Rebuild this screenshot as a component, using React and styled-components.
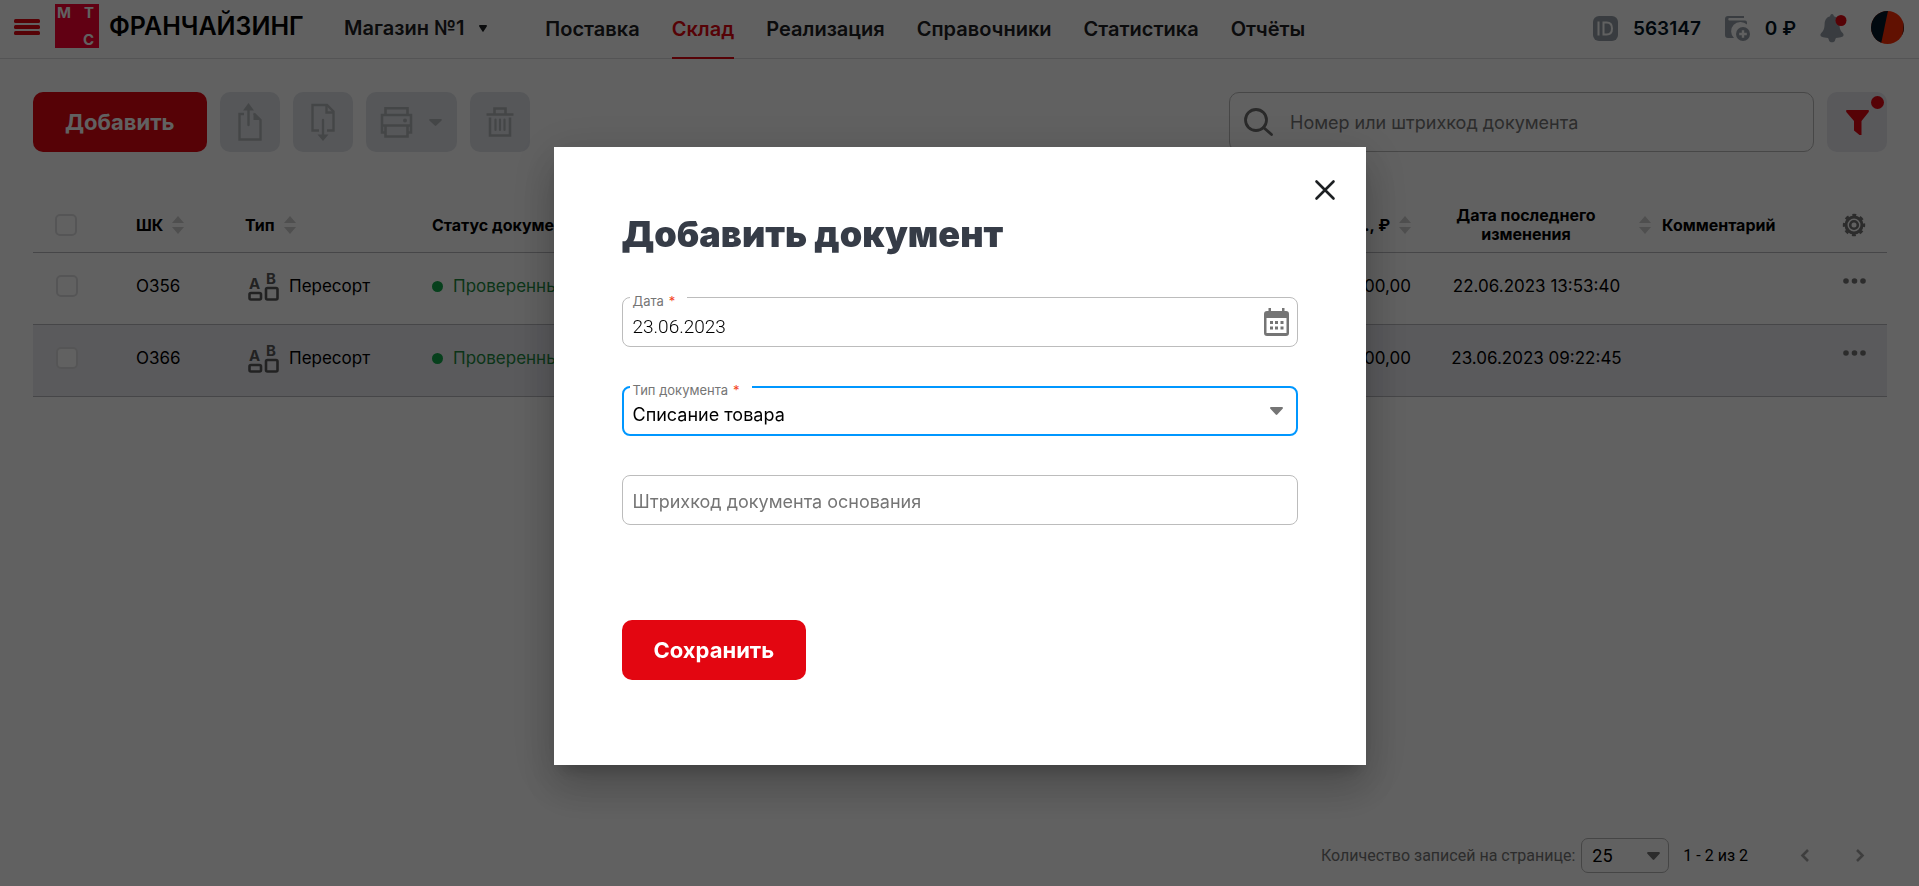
import React, { useState } from 'react';
import styled, { createGlobalStyle } from 'styled-components';

const GlobalStyle = createGlobalStyle`
  * {
    box-sizing: border-box;
  }

  body {
    margin: 0;
    background: #fff;
    color: #000;
    font-family: Inter, Roboto, sans-serif;
  }

  button, input, select {
    font-family: inherit;
  }

  button {
    border: 0;
    padding: 0;
    background: none;
    cursor: pointer;
  }

  svg {
    display: block;
    overflow: visible;
  }
`;

const menu = ['Поставка', 'Склад', 'Реализация', 'Справочники', 'Статистика', 'Отчёты'];

const documents = [
  { code: 'О356', type: 'Пересорт', status: 'Проверенный', sum: '5 000,00', changed: '22.06.2023 13:53:40' },
  { code: 'О366', type: 'Пересорт', status: 'Проверенный', sum: '5 000,00', changed: '23.06.2023 09:22:45' },
];

/* icons */

const BurgerIcon = () => (
  <svg width="26" height="16" viewBox="0 0 26 16" fill="#e30611">
    <rect width="26" height="4" rx="1.5" />
    <rect y="6" width="26" height="4" rx="1.5" />
    <rect y="12" width="26" height="4" rx="1.5" />
  </svg>
);

const Caret = ({ width = 13, height = 8, color = '#757575' }) => (
  <svg width={width} height={height} viewBox="0 0 13 8" fill={color} preserveAspectRatio="none">
    <path d="M1.2 0h10.6c1 0 1.5 1 .8 1.8L7.3 7.5c-.4.5-1.2.5-1.6 0L.4 1.8C-.3 1 .2 0 1.2 0z" />
  </svg>
);

const SortIcon = () => (
  <svg width="12" height="18" viewBox="0 0 12 18" fill="#cfcfcf">
    <path d="M6 0l6 7H0zM0 11h12l-6 7z" />
  </svg>
);

const IdIcon = () => (
  <svg width="25" height="25" viewBox="0 0 25 25">
    <rect width="25" height="25" rx="6" fill="#969fa8" />
    <path d="M5.5 5.5v14M10.5 6.5h3.2c3.5 0 5.3 2.200 5.300 6s-1.800 6-5.300 6h-3.200z" fill="none" stroke="#fff" strokeWidth="2" />
  </svg>
);

const WalletIcon = () => (
  <svg width="25" height="25" viewBox="0 0 25 25">
    <path d="M3 0h16v2H4.5a1 1 0 0 0 0 2.5H20a2 2 0 0 1 2 2v2A9.3 9.3 0 0 0 9 22H3a3 3 0 0 1-3-3V3a3 3 0 0 1 3-3z" fill="#969fa8" />
    <circle cx="18" cy="18" r="7" fill="#969fa8" />
    <path d="M18 14.200v7.600M14.200 18h7.600" stroke="#fff" strokeWidth="2.4" />
  </svg>
);

const BellIcon = () => (
  <svg width="27" height="29" viewBox="0 0 27 29">
    <path d="M12 0c1.2 0 1.8 1 1.9 2.3 3.8 1 5.3 4 5.5 7.7.2 5 1 6.7 3.5 9.2 1.200 1.300.8 3-.7 3.500-1.700.6-3.700 1-6.200 1.200-.4.5-.8 1.300-1 2.500-.3 1.200-1.400 1.800-3 1.800s-2.700-.6-3-1.800c-.2-1.200-.6-2-1-2.500-2.500-.2-4.500-.6-6.200-1.200-1.500-.5-1.900-2.200-.7-3.500C3.600 16.700 4.400 15 4.600 10c.2-3.700 1.700-6.700 5.500-7.700C10.200 1 10.800 0 12 0z" fill="#969fa8" />
    <circle cx="21" cy="6.5" r="5.5" fill="#e30611" />
  </svg>
);

const Avatar = () => (
  <svg width="33" height="33" viewBox="0 0 33 33">
    <defs>
      <clipPath id="avatar"><circle cx="16.5" cy="16.5" r="16.5" /></clipPath>
    </defs>
    <g clipPath="url(#avatar)">
      <rect width="33" height="33" fill="#ff2d05" />
      <path d="M0 0h17l-3 14-1 5-3 14H0z" fill="#031a28" />
      <path d="M31 6c2 5 2 14-1 21l3-2V6z" fill="#3c1a1a" />
    </g>
  </svg>
);

const UploadIcon = () => (
  <svg width="24" height="38" viewBox="0 0 24 38" fill="none" stroke="#b4b7ba" strokeWidth="2.4">
    <path d="M6 11H1.5v25.5h21V17L16 10.500" />
    <path d="M15.500 9.500L23 17h-7.500z" fill="#b4b7ba" stroke="none" />
    <path d="M10.5 22V5" strokeLinecap="round" />
    <path d="M5 7.5L10.5 0 16 7.5z" fill="#b4b7ba" stroke="none" />
  </svg>
);

const DownloadIcon = () => (
  <svg width="24" height="38" viewBox="0 0 24 38" fill="none" stroke="#b4b7ba" strokeWidth="2.4">
    <path d="M8 27.5H1.5V2H16l6.5 6.5v19H16" />
    <path d="M15.5 2v7.500h7" />
    <path d="M12 17v16" strokeLinecap="round" />
    <path d="M6.5 31.5h11L12 38z" fill="#b4b7ba" stroke="none" />
  </svg>
);

const PrinterIcon = () => (
  <svg width="33" height="31" viewBox="0 0 33 31" fill="none" stroke="#b4b7ba" strokeWidth="2.6">
    <path d="M5.5 8V1.2h22V8" />
    <path d="M5.5 25.5H2V8h29v17.5h-3.500M1 18.5h31" />
    <path d="M5.5 19v10.5h22V19" />
    <circle cx="25" cy="13.5" r="2" fill="#b4b7ba" stroke="none" />
  </svg>
);

const TrashIcon = () => (
  <svg width="28" height="30" viewBox="0 0 28 30" fill="none" stroke="#b4b7ba" strokeWidth="2.6">
    <path d="M.5 7.500h27M8.500 7V1.500h11V7M4 10.500v18h20v-18" />
    <path d="M9.500 12.500v10.500M14 12.500v10.500M18.500 12.500v10.500" strokeWidth="2.2" strokeLinecap="round" />
  </svg>
);

const SearchIcon = () => (
  <svg width="29" height="28" viewBox="0 0 29 28" fill="none" stroke="#6e6e6e" strokeWidth="2.8" strokeLinecap="round">
    <circle cx="12" cy="12" r="10.5" />
    <path d="M19.5 19.5l8 7" />
  </svg>
);

const FilterIcon = () => (
  <svg width="23" height="25" viewBox="0 0 23 25" fill="#e30611">
    <path d="M.5 0h22c.5.5.5 1.5 0 2.3L15.500 11v14h-2L8 20.500V11L.5 2.300C0 1.500 0 .5.5 0z" />
  </svg>
);

const ResortIcon = () => (
  <svg width="31" height="31" viewBox="0 0 31 31" fill="none" stroke="#5b5b5b" strokeWidth="2.6">
    <text x="1" y="18" fontFamily="Inter" fontSize="15" fontWeight="700" fill="#5b5b5b" stroke="none">A</text>
    <text x="18" y="13" fontFamily="Inter" fontSize="15" fontWeight="700" fill="#5b5b5b" stroke="none">B</text>
    <rect x="1.5" y="22" width="11.5" height="6.5" rx="1.5" />
    <rect x="18" y="17" width="11.5" height="11.5" rx="1.5" />
  </svg>
);

const GearIcon = () => (
  <svg width="22" height="22" viewBox="0 0 22 22" fill="none" stroke="#757575">
    <circle cx="11" cy="11" r="8" strokeWidth="3" />
    <circle cx="11" cy="11" r="10" strokeWidth="2.4" strokeDasharray="3.93 3.924" strokeDashoffset="1.96" />
    <circle cx="11" cy="11" r="3.8" strokeWidth="2.6" />
  </svg>
);

const DotsIcon = () => (
  <svg width="23" height="6" viewBox="0 0 23 6" fill="#757575">
    <circle cx="3" cy="3" r="2.8" />
    <circle cx="11.5" cy="3" r="2.8" />
    <circle cx="20" cy="3" r="2.8" />
  </svg>
);

const Chevron = ({ right }) => (
  <svg width="8" height="13" viewBox="0 0 8 13" fill="none" stroke="#a4a4a4" strokeWidth="2.6">
    <path d={right ? 'M1 1l5.500 5.500L1 12' : 'M7 1L1.500 6.500 7 12'} />
  </svg>
);

const CloseIcon = () => (
  <svg width="20" height="20" viewBox="0 0 20 20" fill="none" stroke="#1d2023" strokeWidth="2.6" strokeLinecap="round">
    <path d="M1.500 1.500l17 17M18.500 1.500l-17 17" />
  </svg>
);

const CalendarIcon = () => (
  <svg width="25" height="28" viewBox="0 0 25 28" fill="#757575">
    <path fillRule="evenodd" d="M3 3h1.500V0H7v3h11V0h2.500v3H22a3 3 0 0 1 3 3v19a3 3 0 0 1-3 3H3a3 3 0 0 1-3-3V6a3 3 0 0 1 3-3zM2.500 10v15h20V10z" />
    <path d="M6 13h3v3H6zM11 13h3v3h-3zM16.500 13h3v3h-3zM6 18.500h3v3H6zM11 18.500h3v3h-3zM16.500 18.500h3v3h-3z" />
  </svg>
);

/* page */

const Page = styled.div`
  display: flex;
  flex-direction: column;
  min-height: 100vh;
`;

const Header = styled.header`
  display: flex;
  align-items: center;
  height: 59px;
  padding: 0 15px 0 14px;
  border-bottom: 1px solid #dcdcdf;
`;

const Logo = styled.a`
  display: flex;
  align-items: center;
  gap: 10px;
  width: 264px;
  margin: 0 25px 6px 15px;
  color: #000;
  font-size: 25px;
  font-weight: 600;
  text-decoration: none;
`;

const LogoMark = styled.svg`
  flex: none;
  font: 700 15px Inter, sans-serif;
`;

const BurgerButton = styled.button`
  margin-bottom: 5px;
`;

const ShopButton = styled.button`
  display: flex;
  align-items: center;
  gap: 15px;
  padding-bottom: 2px;
  color: #1d2023;
  font-size: 20px;
  font-weight: 600;
`;

const Nav = styled.nav`
  display: flex;
  align-self: stretch;
  gap: 32px;
  margin-left: 58px;
`;

const NavLink = styled.a`
  display: flex;
  align-items: center;
  height: 59px;
  border-bottom: 2px solid ${(props) => (props.$active ? '#e30611' : 'transparent')};
  color: ${(props) => (props.$active ? '#e30611' : '#1d2023')};
  font-size: 20px;
  font-weight: 600;
  text-decoration: none;
`;

const Account = styled.div`
  display: flex;
  align-items: center;
  gap: 24px;
  margin-left: auto;
  padding-bottom: 2px;
`;

const Fact = styled.span`
  display: flex;
  align-items: center;
  gap: 15px;
  color: #001424;
  font-size: 19px;
  font-weight: 600;
`;

const AvatarButton = styled.button`
  margin-bottom: 2px;
`;

const Toolbar = styled.div`
  display: flex;
  gap: 13px;
  padding: 33px 32px 0 33px;
`;

const RedButton = styled.button`
  height: 60px;
  padding: 0 32px;
  border-radius: 10px;
  background: #e30611;
  color: #fff;
  font-size: 22px;
  font-weight: 700;
`;

const ToolButton = styled.button`
  display: flex;
  align-items: center;
  justify-content: center;
  gap: 16px;
  position: relative;
  width: ${(props) => (props.$wide ? 91 : 60)}px;
  height: 60px;
  border-radius: 10px;
  background: ${(props) => (props.$filter ? '#e9e9f0' : '#e2e5eb')};
`;

const FilterDot = styled.span`
  position: absolute;
  top: 4px;
  right: 3px;
  width: 13px;
  height: 13px;
  border-radius: 50%;
  background: #e30611;
`;

const Search = styled.label`
  display: flex;
  align-items: center;
  gap: 15px;
  width: 585px;
  height: 60px;
  margin-left: auto;
  padding: 0 14px;
  border: 1px solid #bbb;
  border-radius: 10px;
`;

const SearchInput = styled.input`
  flex: 1;
  border: 0;
  outline: 0;
  background: none;
  font-size: 18px;

  &::placeholder {
    color: #757575;
  }
`;

const TableWrap = styled.div`
  padding: 46px 32px 0 33px;
`;

const Table = styled.table`
  width: 100%;
  table-layout: fixed;
  border-collapse: separate;
  border-spacing: 0;
`;

const HeadCell = styled.th`
  width: ${(props) => props.$width || 'auto'};
  height: 55px;
  padding: 0 ${(props) => props.$right || '0'} 0 ${(props) => props.$left || '0'};
  border-bottom: 1px solid #b9b9be;
  font-size: 16px;
  font-weight: 700;
  line-height: 19px;
  text-align: left;
`;

const HeadLabel = styled.div`
  display: flex;
  align-items: center;
  justify-content: ${(props) => props.$justify || 'flex-start'};
  gap: 9px;
`;

const HeadText = styled.span`
  flex: 1;
  text-align: center;
`;

const Row = styled.tr`
  background: ${(props) => (props.$shaded ? '#ececf2' : 'transparent')};
`;

const Cell = styled.td`
  height: 72px;
  padding: 0 ${(props) => props.$right || '0'} 5px ${(props) => props.$left || '0'};
  border-bottom: 1px solid #b9b9be;
  font-size: 17px;
  text-align: ${(props) => props.$align || 'left'};
`;

const Checkbox = styled.input`
  appearance: none;
  display: block;
  width: 22px;
  height: 22px;
  margin: 0;
  border: 2px solid #e0e0e2;
  border-radius: 5px;
  background: #fff;
`;

const Inline = styled.span`
  display: flex;
  align-items: center;
  gap: 10px;
`;

const Status = styled(Inline)`
  color: #208a40;

  &::before {
    content: '';
    width: 11px;
    height: 11px;
    border-radius: 50%;
    background: #12a84a;
  }
`;

const IconButton = styled.button`
  display: block;
`;

const MoreButton = styled(IconButton)`
  margin-bottom: 10px;
`;

const Footer = styled.footer`
  display: flex;
  align-items: center;
  justify-content: flex-end;
  margin-top: auto;
  padding: 0 55px 13px;
  font-family: Roboto, sans-serif;
  font-size: 16px;
`;

const PageSizeLabel = styled.label`
  color: #757575;
`;

const PageSizeBox = styled.span`
  display: grid;
  align-items: center;
  width: 88px;
  height: 35px;
  margin: 0 14px 0 6px;

  & > * {
    grid-area: 1 / 1;
  }

  & > svg {
    justify-self: end;
    margin-right: 9px;
    pointer-events: none;
  }
`;

const PageSize = styled.select`
  appearance: none;
  width: 100%;
  height: 100%;
  padding: 0 10px;
  border: 1px solid #b5b5b5;
  border-radius: 7px;
  background: none;
  font-size: 18px;
`;

const PageButtons = styled.span`
  display: flex;
  gap: 47px;
  margin-left: 53px;
`;

/* dialog */

const Overlay = styled.div`
  position: fixed;
  inset: 0;
  z-index: 10;
  display: flex;
  align-items: center;
  justify-content: center;
  padding-top: 26px;
  background: rgba(0, 0, 0, 0.62);
`;

const Dialog = styled.form`
  display: flex;
  flex-direction: column;
  width: 812px;
  padding: 33px 68px 85px;
  background: #fff;
  box-shadow: 0 11px 15px -7px rgba(0, 0, 0, 0.2), 0 24px 38px 3px rgba(0, 0, 0, 0.14),
    0 9px 46px 8px rgba(0, 0, 0, 0.12);
`;

const CloseButton = styled.button`
  align-self: flex-end;
  margin-right: -37px;
`;

const Title = styled.h2`
  margin: 11px 0 39px;
  color: #363c47;
  font-size: 36px;
  font-weight: 900;
  line-height: 47px;
`;

const Field = styled.div`
  position: relative;
  display: grid;
  align-items: center;
  height: 50px;
  margin-bottom: 39px;

  & > input, & > select {
    grid-area: 1 / 1;
  }

  & > button {
    grid-area: 1 / 1;
    justify-self: end;
    margin-right: 9px;
  }
`;

const FieldLabel = styled.label`
  position: absolute;
  top: -4px;
  left: 8px;
  padding: 0 12px 0 3px;
  background: #fff;
  color: #757575;
  font-size: 13px;
  line-height: 17px;
`;

const Required = styled.span`
  margin-left: 5px;
  color: #f44321;
`;

const control = `
  appearance: none;
  width: 100%;
  height: 50px;
  border-radius: 8px;
  background: none;
  color: #000;
  font-size: 18px;
  outline: 0;
`;

const TextInput = styled.input`
  ${control}
  padding: 3px 10px 0;
  border: 1px solid #bcbcbc;

  &::placeholder {
    color: #757575;
  }
`;

const DateInput = styled(TextInput)`
  padding-top: 8px;
  font-family: Roboto, sans-serif;
  font-size: 19px;
  font-weight: 300;
`;

const SelectInput = styled.select`
  ${control}
  padding: 6px 9px 0;
  border: 2px solid #0097ff;
`;

const SelectCaret = styled.span`
  grid-area: 1 / 1;
  justify-self: end;
  margin-right: 15px;
  pointer-events: none;
`;

const SaveButton = styled(RedButton)`
  align-self: flex-start;
  margin-top: 56px;
`;

function App() {
  const [date, setDate] = useState('23.06.2023');
  const [type, setType] = useState('Списание товара');
  const [barcode, setBarcode] = useState('');
  const [open, setOpen] = useState(true);

  return (
    <Page>
      <GlobalStyle />
      <Header>
        <BurgerButton type="button" aria-label="Меню"><BurgerIcon /></BurgerButton>
        <Logo href="#">
          <LogoMark width="44" height="44" viewBox="0 0 44 44" fill="#fff">
            <rect width="44" height="44" fill="#ff0032" />
            <text x="2" y="14">М</text>
            <text x="29" y="14">Т</text>
            <text x="28" y="41">С</text>
          </LogoMark>
          ФРАНЧАЙЗИНГ
        </Logo>
        <ShopButton type="button">
          Магазин №1
          <Caret width={8} height={7} color="#1d2023" />
        </ShopButton>
        <Nav>
          {menu.map((item) => (
            <NavLink key={item} href="#" $active={item === 'Склад'}>{item}</NavLink>
          ))}
        </Nav>
        <Account>
          <Fact><IdIcon /> 563147</Fact>
          <Fact><WalletIcon /> 0 ₽</Fact>
          <button type="button" aria-label="Уведомления"><BellIcon /></button>
          <AvatarButton type="button" aria-label="Профиль"><Avatar /></AvatarButton>
        </Account>
      </Header>

      <Toolbar>
        <RedButton type="button" onClick={() => setOpen(true)}>Добавить</RedButton>
        <ToolButton type="button" aria-label="Экспорт"><UploadIcon /></ToolButton>
        <ToolButton type="button" aria-label="Импорт"><DownloadIcon /></ToolButton>
        <ToolButton type="button" aria-label="Печать" $wide>
          <PrinterIcon />
          <Caret height={7} color="#b4b7ba" />
        </ToolButton>
        <ToolButton type="button" aria-label="Удалить"><TrashIcon /></ToolButton>
        <Search>
          <SearchIcon />
          <SearchInput type="search" placeholder="Номер или штрихкод документа" />
        </Search>
        <ToolButton type="button" aria-label="Фильтр" $filter>
          <FilterIcon />
          <FilterDot />
        </ToolButton>
      </Toolbar>

      <TableWrap>
        <Table>
          <thead>
            <tr>
              <HeadCell $width="103px" $left="22px"><Checkbox type="checkbox" aria-label="Выбрать все" /></HeadCell>
              <HeadCell $width="109px"><HeadLabel>ШК <SortIcon /></HeadLabel></HeadCell>
              <HeadCell $width="187px"><HeadLabel>Тип <SortIcon /></HeadLabel></HeadCell>
              <HeadCell>Статус документа</HeadCell>
              <HeadCell $right="11px"><HeadLabel $justify="flex-end">Сумма закуп., ₽ <SortIcon /></HeadLabel></HeadCell>
              <HeadCell $width="229px">
                <HeadLabel><HeadText>Дата последнего<br />изменения</HeadText> <SortIcon /></HeadLabel>
              </HeadCell>
              <HeadCell $width="171px" $left="11px">Комментарий</HeadCell>
              <HeadCell $width="65px" $left="21px">
                <IconButton type="button" aria-label="Настройки"><GearIcon /></IconButton>
              </HeadCell>
            </tr>
          </thead>
          <tbody>
            {documents.map((doc, i) => (
              <Row key={doc.code} $shaded={i % 2 === 1}>
                <Cell $left="23px"><Checkbox type="checkbox" aria-label={doc.code} /></Cell>
                <Cell>{doc.code}</Cell>
                <Cell $left="3px"><Inline><ResortIcon /> {doc.type}</Inline></Cell>
                <Cell><Status>{doc.status}</Status></Cell>
                <Cell $align="right" $right="11px">{doc.sum}</Cell>
                <Cell $align="center">{doc.changed}</Cell>
                <Cell />
                <Cell $left="21px"><MoreButton type="button" aria-label="Действия"><DotsIcon /></MoreButton></Cell>
              </Row>
            ))}
          </tbody>
        </Table>
      </TableWrap>

      <Footer>
        <PageSizeLabel htmlFor="page-size">Количество записей на странице:</PageSizeLabel>
        <PageSizeBox>
          <PageSize id="page-size" defaultValue="25">
            <option>25</option>
          </PageSize>
          <Caret />
        </PageSizeBox>
        <span>1 - 2 из 2</span>
        <PageButtons>
          <button type="button" aria-label="Назад"><Chevron /></button>
          <button type="button" aria-label="Вперёд"><Chevron right /></button>
        </PageButtons>
      </Footer>

      {open && (
        <Overlay>
          <Dialog onSubmit={(e) => e.preventDefault()}>
            <CloseButton type="button" aria-label="Закрыть" onClick={() => setOpen(false)}><CloseIcon /></CloseButton>
            <Title>Добавить документ</Title>
            <Field>
              <DateInput id="date" value={date} onChange={(e) => setDate(e.target.value)} />
              <FieldLabel htmlFor="date">Дата<Required>*</Required></FieldLabel>
              <button type="button" aria-label="Календарь"><CalendarIcon /></button>
            </Field>
            <Field>
              <SelectInput id="type" value={type} onChange={(e) => setType(e.target.value)}>
                <option>Списание товара</option>
              </SelectInput>
              <FieldLabel htmlFor="type">Тип документа<Required>*</Required></FieldLabel>
              <SelectCaret><Caret /></SelectCaret>
            </Field>
            <Field>
              <TextInput
                aria-label="Штрихкод документа основания"
                placeholder="Штрихкод документа основания"
                value={barcode}
                onChange={(e) => setBarcode(e.target.value)}
              />
            </Field>
            <SaveButton type="submit">Сохранить</SaveButton>
          </Dialog>
        </Overlay>
      )}
    </Page>
  );
}

export default App;
